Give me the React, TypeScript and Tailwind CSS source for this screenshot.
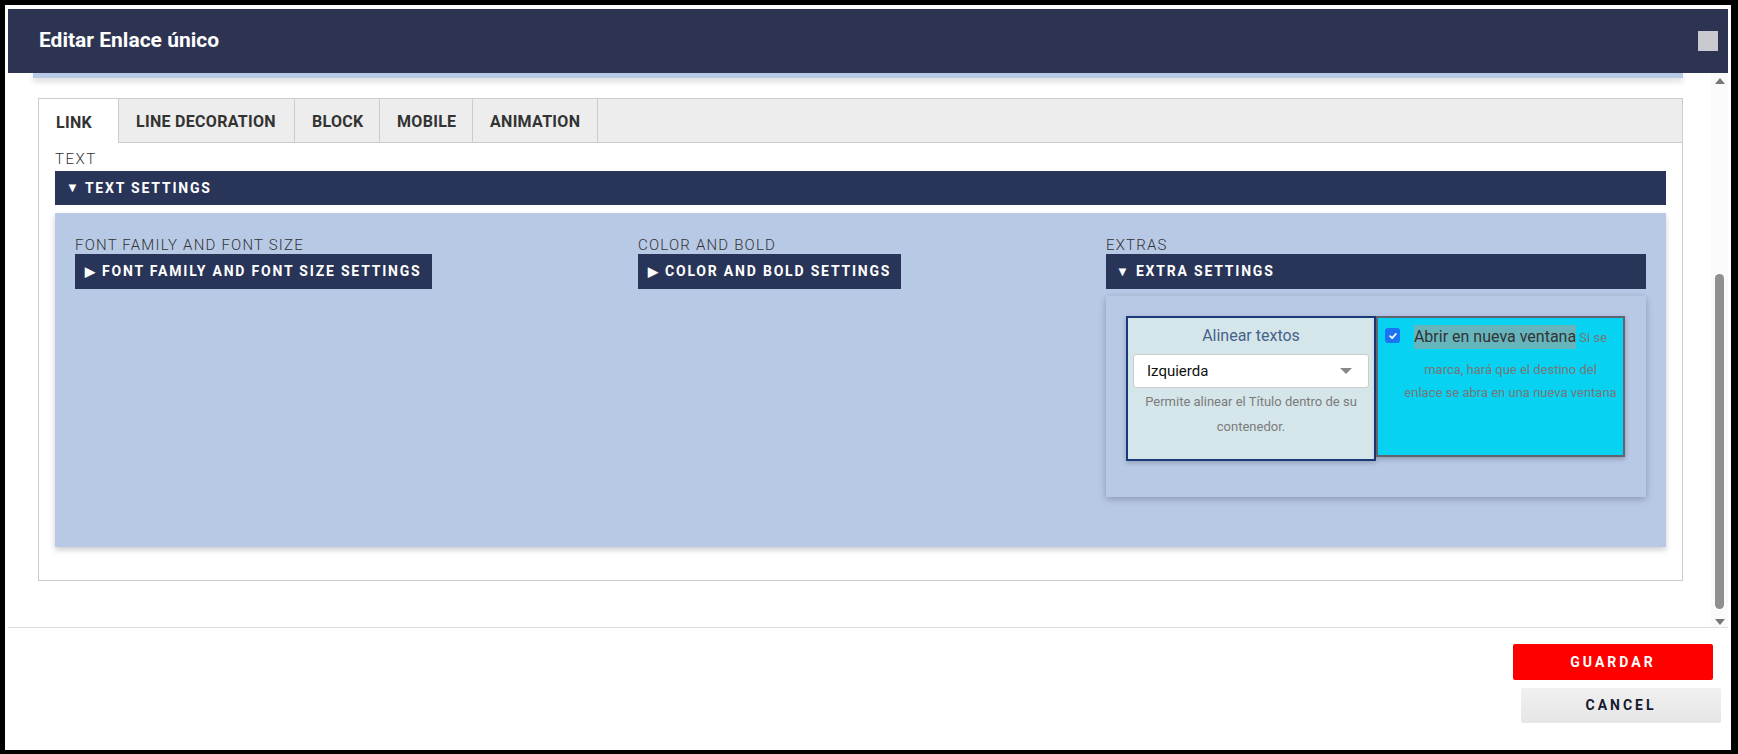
import React from 'react';

const TABS = [
  { label: 'LINK', w: 'w-[80px]', active: true },
  { label: 'LINE DECORATION', w: 'w-[176px]' },
  { label: 'BLOCK', w: 'w-[85px]' },
  { label: 'MOBILE', w: 'w-[93px]' },
  { label: 'ANIMATION', w: 'w-[125px]' },
];

const Label = ({ children }: { children: React.ReactNode }) => (
  <div className="text-[15px] font-light tracking-[1.2px] leading-[18px] text-[#333]">{children}</div>
);

const Toggle = ({ open, text, full }: { open?: boolean; text: string; full?: boolean }) => (
  <div
    className={`${full ? 'flex' : 'inline-flex'} h-[35px] items-center gap-[7px] bg-[#293558] pl-[10px] pr-[10px] text-[14px] font-bold tracking-[1.8px] text-white`}
  >
    <span className="text-[13px] tracking-normal">{open ? '▼' : '▶'}</span>
    <span>{text}</span>
  </div>
);

export default function App() {
  return (
    <div className="h-[754px] w-[1738px] overflow-hidden bg-black font-['Roboto','Liberation_Sans',sans-serif]">
      <div className="ml-[5px] mt-[5px] flex h-[745px] w-[1726px] flex-col bg-white px-[3px] pt-[4px]">
        {/* Header */}
        <div className="flex h-[64px] shrink-0 items-center justify-between bg-[#2d3452] pl-[31px] pr-[10px]">
          <h1 className="text-[21px] font-bold text-white">Editar Enlace único</h1>
          <div className="h-[20px] w-[20px] bg-[#c9c9d0]"></div>
        </div>

        {/* Scroll area */}
        <div className="flex h-[554px] shrink-0">
          <div className="flex-1 overflow-hidden">
            <div className="ml-[25px] h-[5px] w-[1650px] bg-[#b8c9e6] shadow-[0_3px_6px_rgba(0,0,0,0.18)]"></div>

            <div className="ml-[30px] mt-[20px] w-[1645px] border border-[#cccccc]">
              {/* Tabs */}
              <div className="flex h-[44px] border-b border-[#cccccc] bg-[#ededed]">
                {TABS.map((t) => (
                  <div
                    key={t.label}
                    className={`${t.w} flex items-center border-r border-[#cccccc] pl-[17px] pt-[3px] text-[16px] font-bold tracking-[0.3px] text-[#333] ${
                      t.active ? '-mb-px bg-white' : ''
                    }`}
                  >
                    {t.label}
                  </div>
                ))}
              </div>

              <div className="px-4 pb-[33px] pt-[5px]">
                <div className="text-[15px] font-light tracking-[1.5px] leading-[23px] text-[#333]">TEXT</div>
                <div className="flex h-[34px] items-center gap-[6px] bg-[#293558] pl-[11px] text-[14px] font-bold tracking-[1.8px] text-white">
                  <span className="text-[13px] tracking-normal">▼</span>
                  <span>TEXT SETTINGS</span>
                </div>

                <div className="mt-[8px] grid h-[334px] grid-cols-[563px_468px_540px] bg-[#b8c9e6] pl-[20px] pt-[23px] shadow-[0_3px_6px_rgba(0,0,0,0.2)]">
                  <div>
                    <Label>FONT FAMILY AND FONT SIZE</Label>
                    <Toggle text="FONT FAMILY AND FONT SIZE SETTINGS" />
                  </div>
                  <div>
                    <Label>COLOR AND BOLD</Label>
                    <Toggle text="COLOR AND BOLD SETTINGS" />
                  </div>
                  <div>
                    <Label>EXTRAS</Label>
                    <Toggle open full text="EXTRA SETTINGS" />

                    <div className="mt-[7px] flex h-[201px] bg-[#b8c9e6] pl-[20px] pt-[20px] shadow-[0_2px_7px_rgba(0,0,0,0.25)]">
                      {/* Alinear textos */}
                      <div className="h-[145px] w-[250px] border-2 border-[#1b3a7a] bg-[#d4e6ea] px-[5px] pt-[6px] text-center shadow-[0_2px_5px_rgba(0,0,0,0.2)]">
                        <div className="text-[16px] leading-[24px] text-[#47628a]">Alinear textos</div>
                        <div className="mt-[6px] flex h-[34px] items-center justify-between rounded-[3px] border border-[#cccccc] bg-white pl-[13px] pr-[16px]">
                          <span className="text-[15px] text-[#111]">Izquierda</span>
                          <span className="h-0 w-0 border-x-[6px] border-t-[6px] border-x-transparent border-t-[#888]"></span>
                        </div>
                        <div className="mt-[1px] text-[13px] leading-[25px] text-[#7b7b7b]">
                          Permite alinear el Título dentro de su
                          <br />
                          contenedor.
                        </div>
                      </div>

                      {/* Abrir en nueva ventana */}
                      <div className="flex h-[141px] w-[249px] border-2 border-[#5f6470] bg-[#08d2f2] pt-[5px] shadow-[0_2px_5px_rgba(0,0,0,0.25)]">
                        <div className="ml-[7px] mt-[5px] flex h-[15px] w-[15px] shrink-0 items-center justify-center rounded-[3px] bg-[#1a73f0]">
                          <svg viewBox="0 0 12 12" className="h-[10px] w-[10px]">
                            <path d="M2.5 6.2 L5 8.5 L9.5 3.5" fill="none" stroke="white" strokeWidth="2" strokeLinecap="round" strokeLinejoin="round" />
                          </svg>
                        </div>
                        <div className="flex-1 whitespace-nowrap pr-[2px] text-center text-[13px] text-[#777]">
                          <div className="h-[35px] pt-[2px] leading-[24px]">
                            <span className="inline-block bg-[#66b5bd] text-[16px] leading-[24px] text-[#333]">Abrir en nueva ventana</span>{' '}
                            Si se
                          </div>
                          <div className="leading-[23px]">marca, hará que el destino del</div>
                          <div className="leading-[23px]">enlace se abra en una nueva ventana</div>
                        </div>
                      </div>
                    </div>
                  </div>
                </div>
              </div>
            </div>
          </div>

          {/* Scrollbar */}
          <div className="flex w-[17px] shrink-0 flex-col items-center bg-[#fafafa] pt-[5px]">
            <span className="h-0 w-0 border-x-[5px] border-b-[6px] border-x-transparent border-b-[#777]"></span>
            <div className="mt-[190px] h-[335px] w-[9px] rounded-full bg-[#8f8f8f]"></div>
            <span className="mt-[10px] h-0 w-0 border-x-[5px] border-t-[6px] border-x-transparent border-t-[#777]"></span>
          </div>
        </div>

        {/* Footer */}
        <div className="flex flex-1 flex-col items-end border-t border-[#dddddd]">
          <button className="mr-[15px] mt-[16px] h-[36px] w-[200px] rounded-[2px] bg-[#ff0000] text-[14px] font-bold tracking-[3px] text-white">
            GUARDAR
          </button>
          <button className="mr-[7px] mt-[8px] h-[35px] w-[200px] rounded-[2px] bg-gradient-to-b from-[#f0f0f0] to-[#e6e6e6] text-[14px] font-bold tracking-[3px] text-[#151a2e]">
            CANCEL
          </button>
        </div>
      </div>
    </div>
  );
}
